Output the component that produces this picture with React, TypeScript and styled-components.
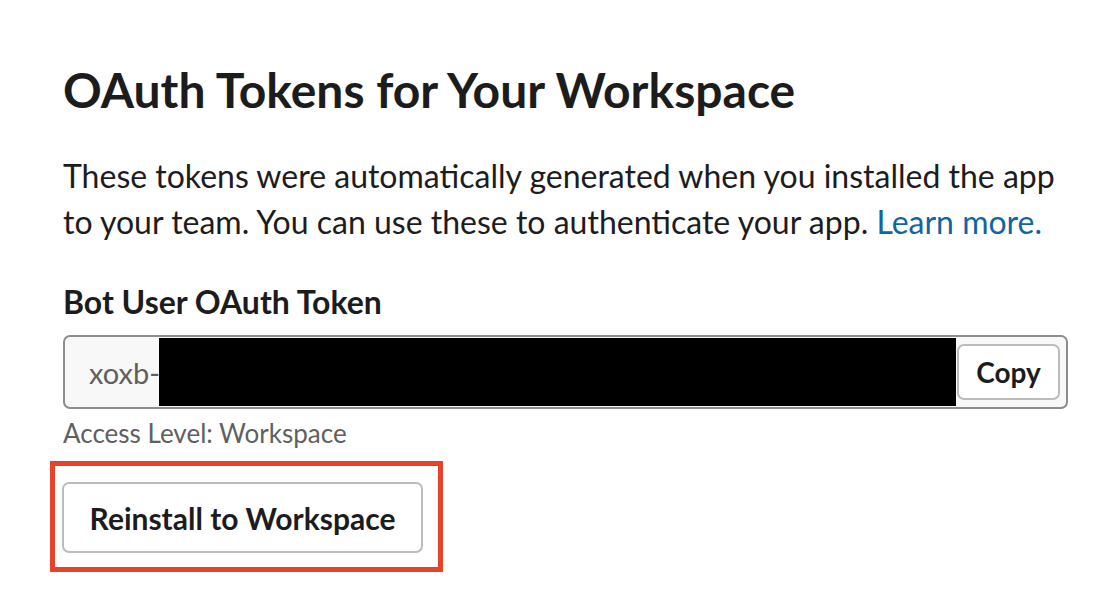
import React from "react";
import styled, { createGlobalStyle } from "styled-components";

const Global = createGlobalStyle`
  html, body { margin: 0; padding: 0; background: #ffffff; }
  body { font-family: Lato, "Noto Sans", "Liberation Sans", sans-serif; color: #1d1c1d; }
`;

const Page = styled.main`
  width: 1120px;
  height: 602px;
  box-sizing: border-box;
  padding: 62px 20px 0 63px;
  overflow: hidden;
`;

const Heading = styled.h1`
  margin: 0;
  font-size: 48px;
  line-height: 56px;
  font-weight: 700;
  white-space: nowrap;
`;

const Lead = styled.p`
  margin: 35px 0 0;
  font-size: 32px;
  line-height: 46px;
  font-weight: 400;
  white-space: nowrap;
`;

const Link = styled.a`
  color: #1264a3;
  text-decoration: none;
`;

const Label = styled.h2`
  margin: 39px 0 0;
  font-size: 32px;
  line-height: 36px;
  font-weight: 700;
`;

const Field = styled.div`
  position: relative;
  margin-top: 15px;
  width: 1005px;
  height: 74px;
  box-sizing: border-box;
  display: flex;
  align-items: center;
  gap: 10px;
  padding: 0 6px 0 24px;
  border: 2px solid #8d8d8d;
  border-radius: 7px;
  background: #f8f8f8;
`;

const TokenText = styled.span`
  flex: 1;
  min-width: 0;
  white-space: nowrap;
  font-size: 29px;
  color: #616061;
`;

const Redaction = styled.div`
  position: absolute;
  left: 94px;
  right: 110px;
  top: 1px;
  bottom: 1px;
  background: #000000;
`;

const CopyButton = styled.button`
  flex: none;
  width: 103px;
  height: 56px;
  box-sizing: border-box;
  border: 2px solid #bcbcbc;
  border-radius: 7px;
  background: #ffffff;
  font-family: Lato, "Noto Sans", sans-serif;
  font-size: 28px;
  font-weight: 700;
  color: #1d1c1d;
  padding: 0;
`;

const Hint = styled.div`
  margin-top: 9px;
  font-size: 26px;
  line-height: 30px;
  color: #616061;
`;

const Highlight = styled.div`
  width: fit-content;
  margin: 13px 0 0 -13px;
  border: 5px solid #e8432a;
  padding: 16px 15px 14px 7px;
`;

const ActionButton = styled.button`
  display: block;
  width: 361px;
  height: 71px;
  box-sizing: border-box;
  border: 2px solid #bcbcbc;
  border-radius: 7px;
  background: #ffffff;
  font-family: Lato, "Noto Sans", sans-serif;
  font-size: 30px;
  font-weight: 700;
  color: #1d1c1d;
  padding: 0;
`;

export default function App() {
  return (
    <Page>
      <Global />
      <Heading>OAuth Tokens for Your Workspace</Heading>
      <Lead>
        These tokens were automatically generated when you installed the app
        <br />
        to your team. You can use these to authenticate your app.{" "}
        <Link href="#">Learn more.</Link>
      </Lead>
      <Label>Bot User OAuth Token</Label>
      <Field>
        <TokenText>xoxb-1234567890123-1234567890123-abcdefghij</TokenText>
        <Redaction />
        <CopyButton>Copy</CopyButton>
      </Field>
      <Hint>Access Level: Workspace</Hint>
      <Highlight>
        <ActionButton>Reinstall to Workspace</ActionButton>
      </Highlight>
    </Page>
  );
}
